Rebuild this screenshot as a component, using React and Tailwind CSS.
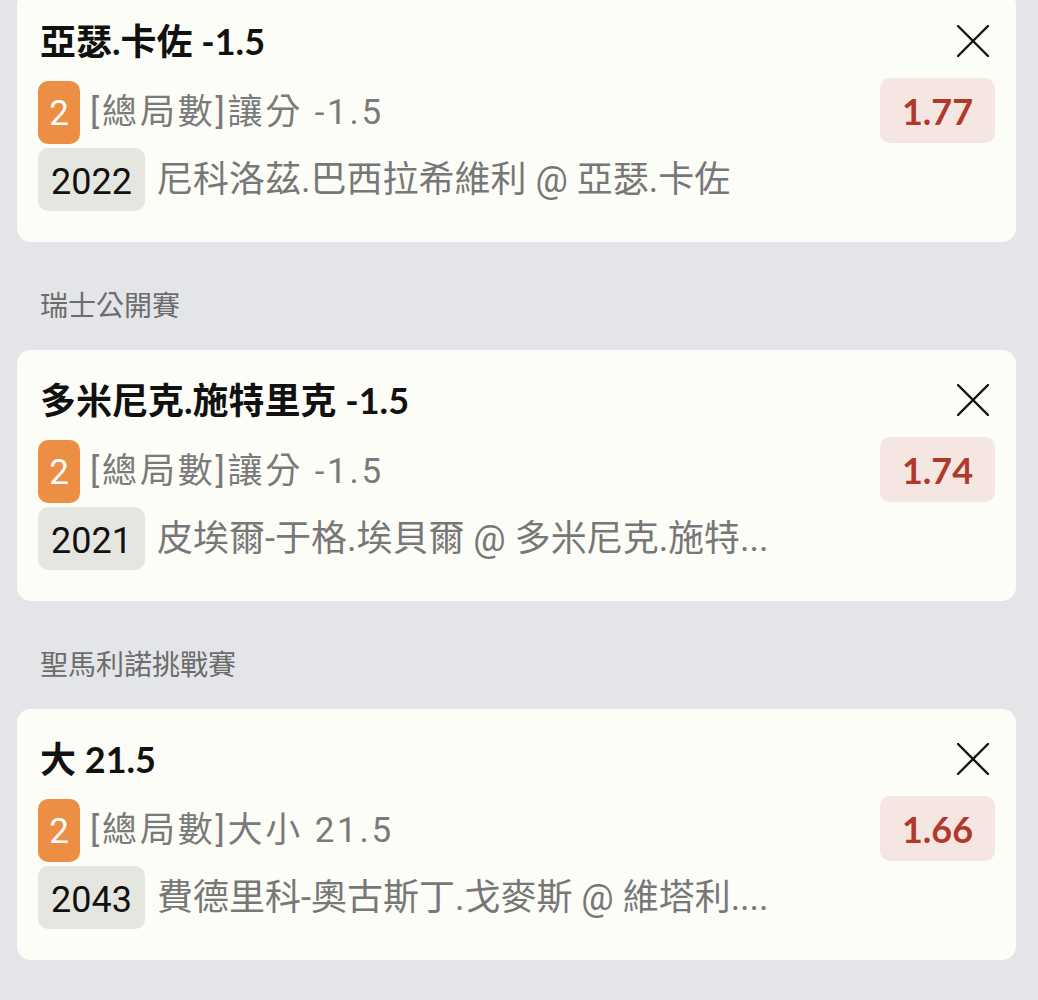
import React from "react";

const cards = [
  {
    header: null,
    title: "亞瑟.卡佐 -1.5",
    market: "[總局數]讓分 -1.5",
    odds: "1.77",
    code: "2022",
    match: "尼科洛茲.巴西拉希維利 @ 亞瑟.卡佐",
  },
  {
    header: "瑞士公開賽",
    title: "多米尼克.施特里克 -1.5",
    market: "[總局數]讓分 -1.5",
    odds: "1.74",
    code: "2021",
    match: "皮埃爾-于格.埃貝爾 @ 多米尼克.施特...",
  },
  {
    header: "聖馬利諾挑戰賽",
    title: "大 21.5",
    market: "[總局數]大小 21.5",
    odds: "1.66",
    code: "2043",
    match: "費德里科-奧古斯丁.戈麥斯 @ 維塔利....",
  },
];

const latin = { fontFamily: "Lato, 'Noto Sans CJK TC', sans-serif" };
const body = { fontFamily: "Roboto, 'Noto Sans CJK TC', sans-serif" };

function CloseIcon() {
  return (
    <svg width="32" height="32" viewBox="0 0 32 32" fill="none">
      <line x1="1" y1="1" x2="31" y2="31" stroke="#111" strokeWidth="2.4" strokeLinecap="round" />
      <line x1="31" y1="1" x2="1" y2="31" stroke="#111" strokeWidth="2.4" strokeLinecap="round" />
    </svg>
  );
}

function Card({ c }) {
  return (
    <div className="ml-[17px] mr-[22px] rounded-[14px] bg-[#fdfdf7] px-[21px] pt-[30px] pb-[31px]">
      <div className="flex h-[40px] items-center justify-between">
        <div className="pl-[2px] text-[36px] font-bold leading-[40px] text-[#111]" style={latin}>
          {c.title}
        </div>
        <div className="flex h-[40px] w-[45px] items-center justify-center">
          <CloseIcon />
        </div>
      </div>
      <div className="mt-[20px] flex h-[63px] items-center justify-between">
        <div className="flex items-center">
          <div
            className="flex h-[63px] w-[42px] items-center justify-center rounded-[10px] bg-[#ec8e44] pt-[4px] text-[35px] text-white"
            style={body}
          >
            2
          </div>
          <div
            className="ml-[10px] text-[35px] leading-[40px] tracking-[2.8px] text-[#7a7a7a]"
            style={body}
          >
            {c.market}
          </div>
        </div>
        <div
          className="-mt-[4px] flex h-[65px] w-[115px] items-center justify-center rounded-[10px] bg-[#f5e6e1] text-[36px] font-bold text-[#b0392b]"
          style={latin}
        >
          {c.odds}
        </div>
      </div>
      <div className="mt-[4px] flex h-[63px] items-center">
        <div
          className="flex h-[63px] w-[107px] items-center justify-center rounded-[10px] bg-[#e6e6e0] pt-[4px] text-[36px] text-[#111]"
          style={body}
        >
          {c.code}
        </div>
        <div className="ml-[12px] whitespace-nowrap text-[36px] leading-[42px] text-[#777]" style={body}>
          {c.match}
        </div>
      </div>
    </div>
  );
}

export default function App() {
  return (
    <div className="min-h-screen w-[1038px] overflow-hidden bg-[#e4e5e8]">
      <div className="-mt-[9px]">
        {cards.map((c, i) => (
          <div key={i}>
            {c.header && (
              <div
                className="pl-[40px] pt-[50px] pb-[28px] text-[28px] leading-[30px] text-[#6c6c6c]"
                style={body}
              >
                {c.header}
              </div>
            )}
            <Card c={c} />
          </div>
        ))}
      </div>
    </div>
  );
}
